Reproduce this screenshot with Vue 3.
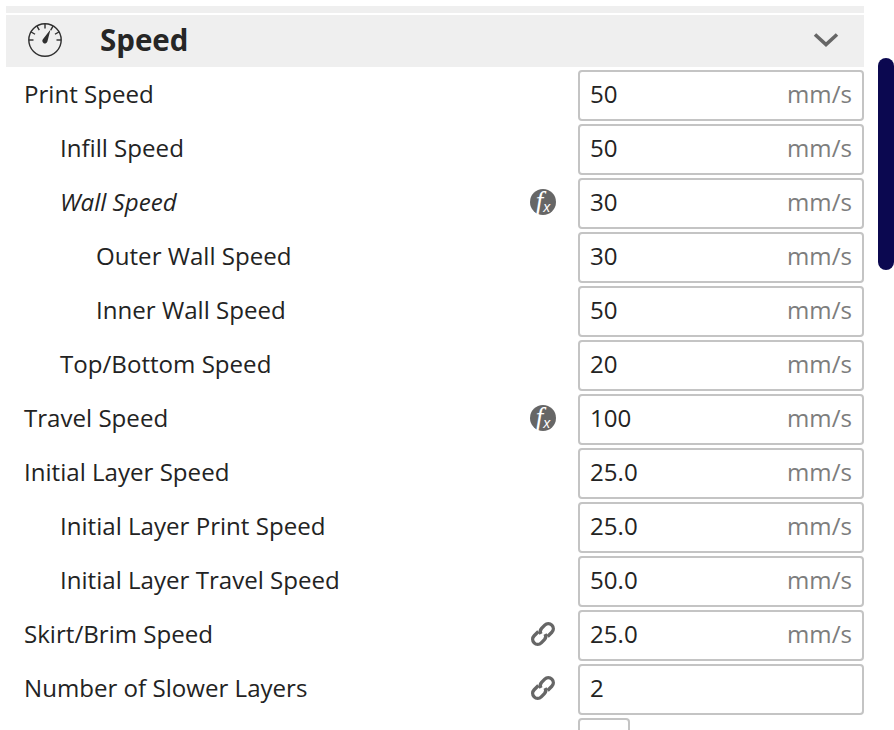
<script setup>
const rows = [
  { label: 'Print Speed', value: '50', unit: 'mm/s', depth: 0 },
  { label: 'Infill Speed', value: '50', unit: 'mm/s', depth: 1 },
  { label: 'Wall Speed', value: '30', unit: 'mm/s', depth: 1, icon: 'fx', italic: true },
  { label: 'Outer Wall Speed', value: '30', unit: 'mm/s', depth: 2 },
  { label: 'Inner Wall Speed', value: '50', unit: 'mm/s', depth: 2 },
  { label: 'Top/Bottom Speed', value: '20', unit: 'mm/s', depth: 1 },
  { label: 'Travel Speed', value: '100', unit: 'mm/s', depth: 0, icon: 'fx' },
  { label: 'Initial Layer Speed', value: '25.0', unit: 'mm/s', depth: 0 },
  { label: 'Initial Layer Print Speed', value: '25.0', unit: 'mm/s', depth: 1 },
  { label: 'Initial Layer Travel Speed', value: '50.0', unit: 'mm/s', depth: 1 },
  { label: 'Skirt/Brim Speed', value: '25.0', unit: 'mm/s', depth: 0, icon: 'link' },
  { label: 'Number of Slower Layers', value: '2', unit: '', depth: 0, icon: 'link' },
]
const ticks = [-90, -60, -30, 0, 30, 60, 90]
</script>

<template>
  <div class="page">
    <div class="strip"></div>
    <header class="head">
      <svg class="gauge" width="36" height="36" viewBox="0 0 36 36" fill="none" stroke="#2f2f2f">
        <circle cx="18" cy="18" r="16.2" stroke-width="1.4" />
        <line
          v-for="t in ticks"
          :key="t"
          x1="18"
          y1="2"
          x2="18"
          y2="6.5"
          stroke-width="1.4"
          :transform="`rotate(${t} 18 18)`"
        />
        <path d="M23.5 7.5 L20.4 19.6 A2.6 2.6 0 1 1 15.9 17.2 Z" fill="#2f2f2f" stroke="none" />
      </svg>
      <h2 class="head-title">Speed</h2>
      <svg class="chev" width="26" height="16" viewBox="0 0 26 16" fill="none">
        <path d="M2 2.5 L13 12.5 L24 2.5" stroke="#666" stroke-width="3.6" />
      </svg>
    </header>

    <div class="rows">
      <div v-for="row in rows" :key="row.label" class="row">
        <span class="label" :class="[`depth-${row.depth}`, { italic: row.italic }]">{{ row.label }}</span>
        <span v-if="row.icon === 'fx'" class="fx"><i class="fx-f">f</i><i class="fx-x">x</i></span>
        <svg v-else-if="row.icon === 'link'" class="link" width="28" height="28" viewBox="0 0 28 28" fill="none" stroke="#666" stroke-width="3.4">
          <g transform="rotate(-45 14 14)">
            <path d="M12.5 9 H6.5 A5 5 0 0 0 6.5 19 H11 A5 5 0 0 0 15.5 15.5" />
            <path d="M15.5 19 H21.5 A5 5 0 0 0 21.5 9 H17 A5 5 0 0 0 12.5 12.5" />
          </g>
        </svg>
        <div class="field">
          <span>{{ row.value }}</span>
          <span class="unit">{{ row.unit }}</span>
        </div>
      </div>
      <div class="stub"></div>
    </div>

    <div class="scrollbar"></div>
  </div>
</template>

<style>
html,
body {
  margin: 0;
  background: #fff;
}
</style>

<style scoped>
.page {
  position: relative;
  width: 894px;
  height: 730px;
  overflow: hidden;
  box-sizing: border-box;
  padding: 6px 30px 0 6px;
  background: #fff;
  font-family: "Open Sans", "Noto Sans", sans-serif;
  color: #232323;
}

.strip {
  height: 7px;
  background: #efefef;
}

.head {
  display: flex;
  align-items: center;
  height: 52px;
  margin-top: 2px;
  padding: 0 25px 0 21px;
  background: #efefef;
}

.gauge {
  flex: none;
  margin-top: -2px;
}

.head-title {
  flex: 1;
  margin: -3px 0 0 37px;
  font-size: 29.5px;
  font-weight: 700;
  line-height: 1;
  color: #262626;
}

.chev {
  flex: none;
  margin-top: -2px;
}

.rows {
  display: flex;
  flex-direction: column;
  gap: 3px;
  margin-top: 3px;
}

.row {
  display: flex;
  align-items: center;
  height: 51px;
}

.label {
  flex: 1;
  font-size: 24.1px;
  line-height: 1;
  margin-top: -2.5px;
}

.depth-0 {
  padding-left: 18px;
}

.depth-1 {
  padding-left: 54px;
}

.depth-2 {
  padding-left: 90px;
}

.italic {
  font-style: italic;
}

.fx {
  flex: none;
  display: flex;
  align-items: center;
  justify-content: center;
  width: 26px;
  height: 26px;
  margin: -3px 22px 0 0;
  border-radius: 50%;
  background: #666;
  color: #fff;
  line-height: 1;
}

.fx-f {
  font-family: "Liberation Serif", serif;
  font-size: 27px;
  margin-top: -2px;
}

.fx-x {
  font-family: "Liberation Sans", sans-serif;
  font-size: 14px;
  margin: 9px 0 0 0;
}

.link {
  flex: none;
  margin: -3px 21px 0 0;
}

.field {
  flex: none;
  display: flex;
  align-items: center;
  justify-content: space-between;
  box-sizing: border-box;
  width: 286px;
  height: 51px;
  padding: 0 10px 4px 10px;
  border: 2px solid #c4c4c4;
  border-radius: 4px;
  background: #fff;
  font-size: 24.1px;
}

.unit {
  color: #7d7d7d;
}

.stub {
  width: 52px;
  height: 40px;
  margin-left: 572px;
  box-sizing: border-box;
  border: 2px solid #c4c4c4;
  border-radius: 4px;
}

.scrollbar {
  position: absolute;
  top: 58px;
  left: 878px;
  width: 16px;
  height: 212px;
  border-radius: 8px;
  background: #0b0850;
}
</style>
